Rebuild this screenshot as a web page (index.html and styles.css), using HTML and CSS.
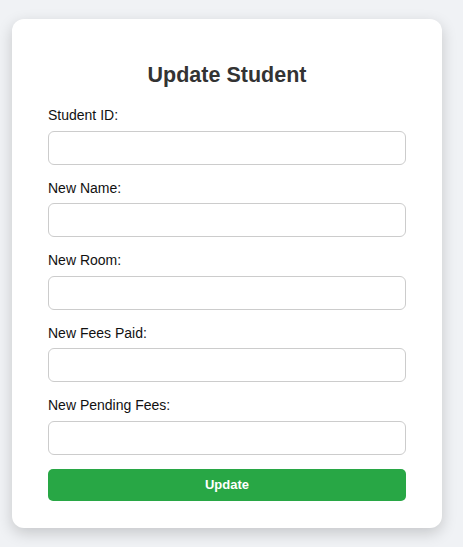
FILE: index.html
```html
<!DOCTYPE html>
<html>
<head>
<meta charset="utf-8">
<link rel="stylesheet" href="styles.css">
</head>
<body>
<div class="card">
  <h2 class="title">Update Student</h2>
  <form class="form">
    <label class="label">Student ID:</label>
    <input class="input" type="text">
    <label class="label">New Name:</label>
    <input class="input" type="text">
    <label class="label">New Room:</label>
    <input class="input" type="text">
    <label class="label">New Fees Paid:</label>
    <input class="input" type="text">
    <label class="label">New Pending Fees:</label>
    <input class="input last" type="text">
    <button class="btn" type="button">Update</button>
  </form>
</div>
</body>
</html>
```

FILE: styles.css
```css
html, body {
  margin: 0;
  padding: 0;
}
body {
  background: #f0f2f5;
  font-family: "Liberation Sans", Arial, sans-serif;
  padding: 19px 0 0 12px;
  min-height: 547px;
  box-sizing: border-box;
}
.card {
  width: 430px;
  box-sizing: border-box;
  background: #fff;
  border-radius: 12px;
  padding: 44px 36px 27px;
  box-shadow: 0 5px 15px rgba(0, 0, 0, 0.18);
}
.title {
  margin: 0 0 19.5px;
  text-align: center;
  font-size: 21.5px;
  font-weight: bold;
  color: #333;
  line-height: 24.5px;
}
.form {
  display: flex;
  flex-direction: column;
}
.label {
  display: block;
  font-size: 14px;
  line-height: 16px;
  color: #111;
  margin-bottom: 7.5px;
}
.input {
  display: block;
  box-sizing: border-box;
  width: 100%;
  height: 34px;
  border: 1px solid #ccc;
  border-radius: 6px;
  padding: 8px;
  font-size: 14px;
  font-family: inherit;
  margin: 0 0 15px;
  background: #fff;
}
.input.last {
  margin-bottom: 14px;
}
.btn {
  display: block;
  width: 100%;
  height: 32px;
  border: none;
  border-radius: 5px;
  background: #28a745;
  color: #fff;
  font-family: inherit;
  font-size: 13px;
  font-weight: bold;
  padding: 0;
}
```
